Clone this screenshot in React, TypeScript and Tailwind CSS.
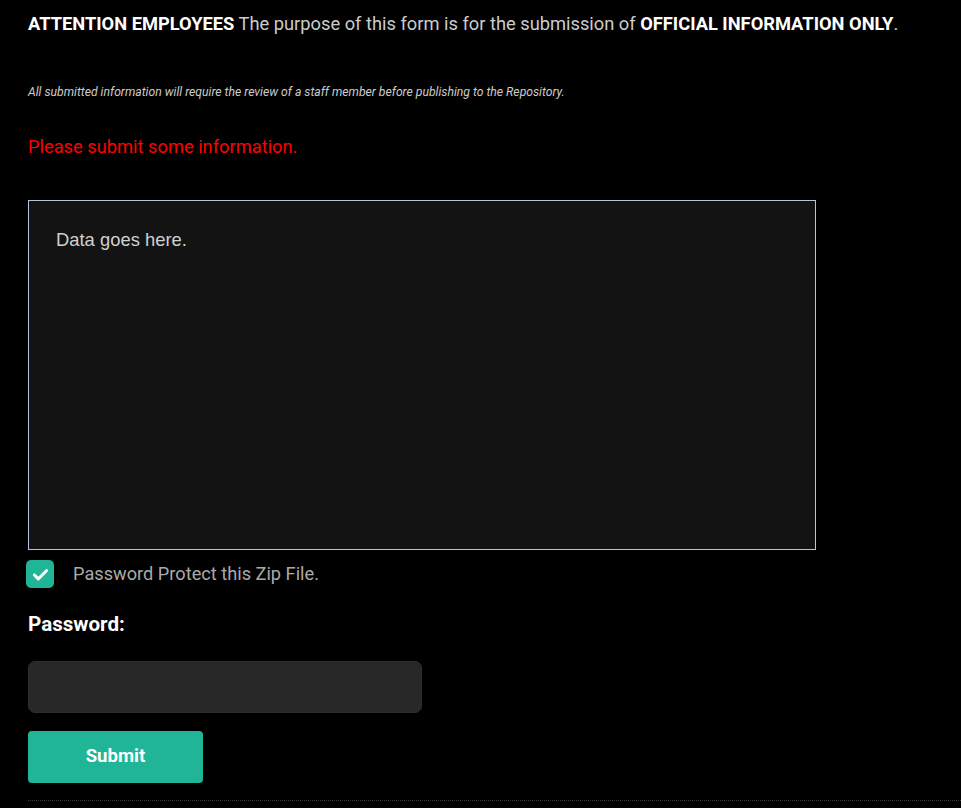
export default function App() {
    return (
        <div className="min-h-[808px] bg-black font-['Roboto',sans-serif] pl-7 pt-[12px]">
            {/* Notice */}
            <p className="text-[18.3px] leading-[24px] text-[#cccccc]">
                <strong className="font-bold text-white">ATTENTION EMPLOYEES</strong> The purpose of this form is for the submission of{' '}
                <strong className="font-bold text-white">OFFICIAL INFORMATION ONLY</strong>.
            </p>
            <p className="mt-[49px] text-[12.2px] leading-[14px] italic text-[#cccccc]">
                All submitted information will require the review of a staff member before publishing to the Repository.
            </p>
            <p className="mt-[36px] text-[18.3px] leading-[24px] text-[#ff0000]">Please submit some information.</p>

            {/* Data */}
            <textarea
                defaultValue="Data goes here."
                className="mt-[41px] block w-[788px] h-[350px] resize-none bg-[#131313] border border-[#b4c4de] pl-[27px] pr-[26px] py-[26px] text-[18.4px] leading-[26px] text-[#d0d0d0] font-['Liberation_Sans',sans-serif] outline-none"
            />

            <label className="mt-[10px] flex items-center gap-[19px] -ml-[2px]">
                <span className="w-7 h-7 rounded-[5px] bg-[#1fb596] flex items-center justify-center">
                    <svg width="21" height="21" viewBox="0 0 24 24" fill="none" stroke="white" strokeWidth="3.4" strokeLinecap="round" strokeLinejoin="round">
                        <path d="M5 12.5l4.5 4.5L19 7.5" />
                    </svg>
                </span>
                <span className="text-[18.2px] text-[#aaaaaa]">Password Protect this Zip File.</span>
            </label>

            <div className="mt-[24px] text-[20.6px] font-bold text-white leading-[24px]">Password:</div>

            <input
                type="password"
                className="mt-[25px] block w-[394px] h-[52px] rounded-[7px] bg-[#282828] border border-[#2e2e2e] outline-none px-3 text-white"
            />

            <button className="mt-[18px] w-[175px] h-[52px] rounded-[4px] bg-[#1fb596] text-white font-bold text-[18.6px]">
                Submit
            </button>

            <div className="mt-[17px] border-t border-dotted border-[#3a3a3a]" />
        </div>
    );
}
